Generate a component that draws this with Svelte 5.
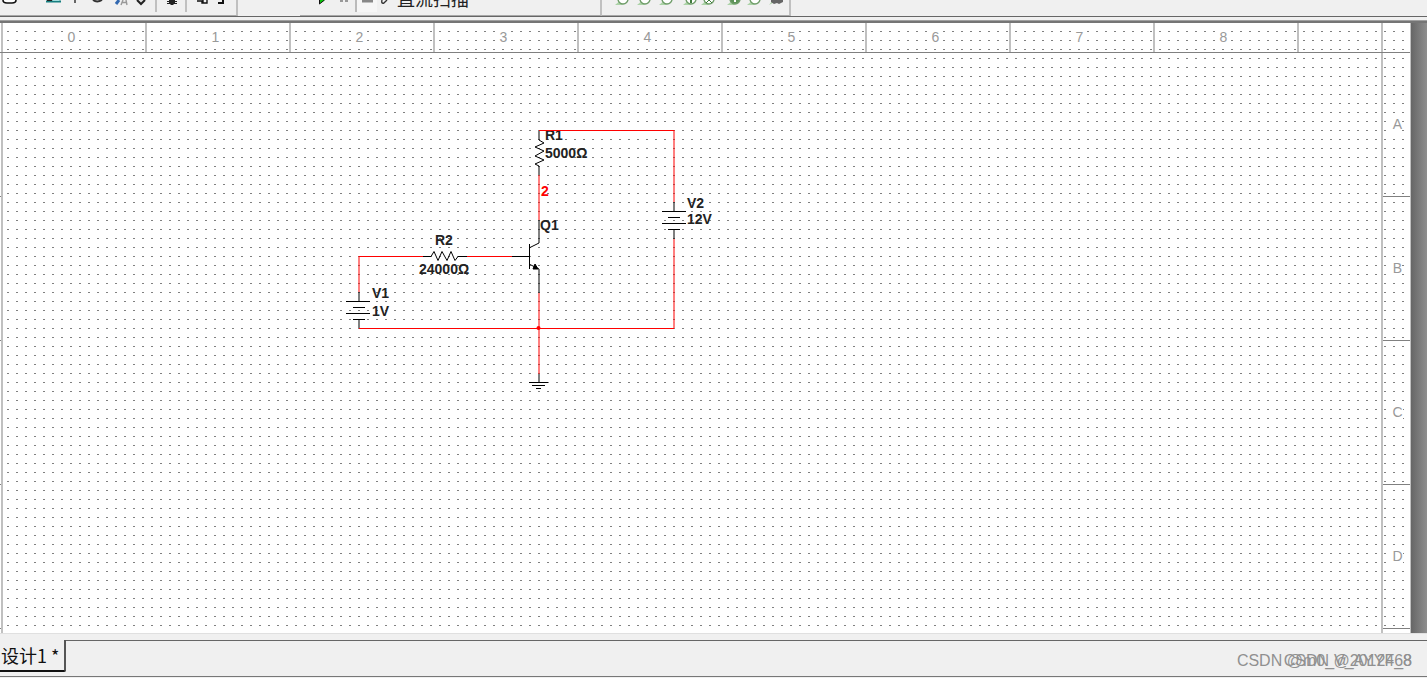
<script>
	const columns = [0, 1, 2, 3, 4, 5, 6, 7, 8];
	const rows = ['A', 'B', 'C', 'D'];
	const probes = [623, 645, 667, 691, 709, 735, 755];
</script>

<div class="app">
	<div class="toolbars">
		<div class="toolbar edit">
			<svg width="236" height="14" viewBox="0 0 236 14" aria-hidden="true">
				<path d="M3 0q0 3 4 3h5q4 0 4-3" fill="#fff" stroke="#111" stroke-width="1.6" />
				<path d="M46 1.5h15" stroke="#167f80" stroke-width="2" />
				<path d="M47 .5h5" stroke="#222" />
				<path d="M53 .5h6" stroke="#a0dcdc" />
				<path d="M75 0v3" stroke="#666" stroke-width="2" />
				<path d="M93 0q4 3 9 0" fill="none" stroke="#333" stroke-width="2" />
				<path d="M116 4l3-4" stroke="#3268b0" stroke-width="3" />
				<path d="M121 5l2-5M127 5l-1-5M122 2.5h5" stroke="#999" stroke-width="1.4" />
				<path d="M137 0l4 4 4-4" fill="#ddd" stroke="#222" stroke-width="2" />
				<path d="M156 0v12M186 0v12" stroke="#c0c0c0" stroke-width="2" />
				<path d="M169 0h6v3l-2 2h-2l-2-2z" fill="#222" />
				<path d="M167 1.5h10M167 3.5h10" stroke="#222" />
				<path d="M197 1h5v2h5v-3M203 0v3" fill="none" stroke="#111" stroke-width="1.4" />
				<path d="M218 3h5v-3" fill="none" stroke="#111" stroke-width="2" />
			</svg>
		</div>
		<div class="toolbar simulate">
			<svg width="96" height="14" viewBox="300 0 96 14" aria-hidden="true">
				<path d="M319 0h6l-6 4z" fill="#0bc60b" />
				<path d="M319.5 0v4l5-4" fill="none" stroke="#111" />
				<path d="M341.500 0v2M346.500 0v2" stroke="#999" stroke-width="3" />
				<path d="M357 0h20v12h-20z" fill="#f6f6f6" />
				<path d="M356 0v12" stroke="#bbb" stroke-width="2" />
				<path d="M362 1h11" stroke="#888" stroke-width="3" />
				<path d="M382 0q-1 4 2 3l3-3" fill="none" stroke="#333" stroke-width="1.4" />
			</svg>
			<span class="analysis">直流扫描</span>
		</div>
		<div class="toolbar probes">
			<svg width="187" height="14" viewBox="602 0 187 14" aria-hidden="true">
				{#each probes as x, i}
					<path d="M{x - 8} 5l6-5 3 3-2 2z" fill="#acd3a7" />
					<circle cx={x} cy="-1" r="5" fill={i === 5 ? '#5d9359' : '#fff'} stroke="#6f9d69" stroke-width="1.4" />
				{/each}
				<path d="M691 0v3" stroke="#417b3e" stroke-width="2" />
				<path d="M735 0v2" stroke="#fff" stroke-width="2" />
				<path d="M706 3l3-3 3 3" fill="none" stroke="#417b3e" />
				<path d="M769 5l4-5h5z" fill="#acd3a7" />
				<path d="M771 0h12v2l-2 1-2 1-2-1-3 1-3-2z" fill="#666" />
			</svg>
		</div>
	</div>

	<main class="workspace">
		<div class="sheet">
			<div class="ruler top">
				{#each columns as column}
					<div class="column"><span>{column}</span></div>
				{/each}
				<div class="column rest"></div>
				<div class="corner"></div>
			</div>
			<div class="body">
				<div class="edge">
					{#each rows as row}
						<div class="row"></div>
					{/each}
				</div>
				<div class="canvas">
					<svg class="circuit" width="400" height="300" viewBox="330 100 400 300">
						<g class="label">
							<text x="545" y="140">R1</text>
							<text x="545" y="158">5000Ω</text>
							<text x="541" y="196" class="net">2</text>
							<text x="540" y="230">Q1</text>
							<text x="435" y="245">R2</text>
							<text x="419" y="274">24000Ω</text>
							<text x="372" y="298">V1</text>
							<text x="372" y="316">1V</text>
							<text x="687" y="208">V2</text>
							<text x="687" y="224">12V</text>
						</g>

						<!-- wires -->
						<g class="wire">
							<path d="M539 130.5H674" />
							<path d="M674 130V202M674 239V328" />
							<path d="M539 175V220M539 293V374" />
							<path d="M359 328.5H674" />
							<path d="M359 292V256M359 256.5H423M467 256.5H512" />
						</g>
						<circle cx="538.5" cy="328" r="2" fill="#f00" />

						<g class="part">
							<!-- R1 -->
							<path d="M539 131V140l5 3-9 4 9 4-9 5 9 4-9 4 4 2V175" />
							<!-- R2 -->
							<path d="M423 256.5h8l3-5 4 9 4-9 5 9 4-9 4 9 3-4h9" />
							<!-- Q1 -->
							<path d="M512 256.5H529M529.5 244V269M529 248L539 243V220M529 264L539 269V293" />
							<path class="solid" d="M535 264l3 5-5 0z" />
							<!-- V1 -->
							<path d="M359 292V301M346 301.5H370M353 307.5H365M346 313.5H370M353 319.5H365M359 320V328" />
							<!-- V2 -->
							<path d="M674 202V211M662 211.5H686M668 217.5H680M662 223.5H686M668 229.5H680M674 230V239" />
							<!-- ground -->
							<path d="M539 374V382M529 382.5H548M532 385.5H545M536 388.5H541" />
						</g>
					</svg>
				</div>
				<div class="ruler side">
					{#each rows as row}
						<div class="row"><span>{row}</span></div>
					{/each}
				</div>
			</div>
		</div>
	</main>

	<footer>
		<button class="tab">设计1 *</button>
		<div class="status">
			<div class="watermark">
				<span>CSDN @m0_V_AYYF_8</span>
				<span>CSDN @2012468</span>
			</div>
		</div>
	</footer>
</div>

<style>
	:global(body) {
		margin: 0;
		background: #f0f0f0;
	}

	.app {
		font-family: 'Liberation Sans', 'Noto Sans CJK SC', sans-serif;
		overflow: hidden;
	}

	.toolbars {
		display: flex;
		height: 16px;
		border-bottom: 1px solid #666;
	}

	.toolbar {
		box-sizing: border-box;
		display: flex;
		height: 16px;
		overflow: hidden;
		border-right: 2px solid #c0c0c0;
		border-bottom: 1px solid #a8a8a8;
	}

	.edit {
		width: 238px;
	}

	.simulate {
		width: 302px;
		margin-left: 62px;
	}

	.probes {
		width: 189px;
	}

	.toolbar svg {
		flex: none;
	}

	.analysis {
		margin-top: -12px;
		margin-left: 1px;
		font-family: 'Noto Sans CJK SC', sans-serif;
		font-size: 18px;
		line-height: 20px;
		color: #222;
	}

	.workspace {
		margin-top: 4px;
		padding-right: 16px;
		border-top: 2px solid #757575;
		box-shadow: 0 -1px #a0a0a0;
		background: linear-gradient(to left, #8e8e8e, #666 16px);
	}

	/* white paper with a 9px dot grid */
	.sheet {
		border-right: 1px solid #c0c0c0;
		background-color: #fff;
		background-image:
			linear-gradient(to right, transparent 2px, #fff 2px),
			linear-gradient(to bottom, #808080 1px, #fff 1px);
		background-position: 7px 8px;
		background-size: 9px 9px;
	}

	.ruler {
		color: #999;
		font-size: 14px;
	}

	.ruler span {
		background: #fff;
		line-height: 14px;
	}

	.top {
		display: flex;
		height: 29px;
		padding-left: 1px;
		border-bottom: 1px solid #808080;
	}

	.column {
		box-sizing: border-box;
		display: flex;
		justify-content: center;
		align-items: center;
		width: 144px;
		padding-right: 5px;
		padding-bottom: 2px;
		border-left: 2px solid #c0c0c0;
	}

	.rest {
		flex: 1;
	}

	.corner {
		width: 27px;
		border-left: 2px solid #c0c0c0;
	}

	.body {
		display: flex;
		height: 580px;
	}

	.edge {
		width: 1px;
	}

	.canvas {
		position: relative;
		flex: 1;
		border-left: 2px solid #c0c0c0;
	}

	.circuit {
		position: absolute;
		left: 327px;
		top: 47px;
	}

	.wire {
		fill: none;
		stroke: #f00;
	}

	.part {
		fill: none;
		stroke: #000;
	}

	.part .solid {
		fill: #000;
	}

	.label {
		fill: #222;
		font-size: 14px;
		font-weight: bold;
	}

	.label .net {
		fill: #f00;
	}

	.side {
		width: 27px;
		border-left: 2px solid #c0c0c0;
	}

	.row {
		box-sizing: border-box;
		display: flex;
		justify-content: center;
		align-items: center;
		height: 144px;
		padding-left: 2px;
		padding-bottom: 2px;
		border-bottom: 1px solid #808080;
	}

	.edge .row {
		padding: 0;
	}

	footer {
		display: flex;
		height: 36px;
		padding-top: 6px;
		border-top: 1px solid #e0e0e0;
		border-bottom: 1px solid #777;
	}

	.tab {
		height: 32px;
		padding: 0 5px 0 1px;
		border: 0;
		border-right: 2px solid #555;
		border-bottom: 2px solid #111;
		border-radius: 0 0 2px 0;
		background: #f0f0f0;
		color: #111;
		font-family: 'Noto Sans CJK SC', sans-serif;
		font-size: 18px;
		line-height: 28px;
	}

	.status {
		display: flex;
		flex: 1;
		justify-content: flex-end;
		border-top: 1px solid #666;
	}

	.watermark {
		display: grid;
		justify-items: end;
		align-content: center;
		margin-right: 15px;
		padding-top: 4px;
		color: #909090;
		font-size: 16px;
		line-height: 20px;
	}

	.watermark span {
		grid-area: 1 / 1;
	}
</style>
